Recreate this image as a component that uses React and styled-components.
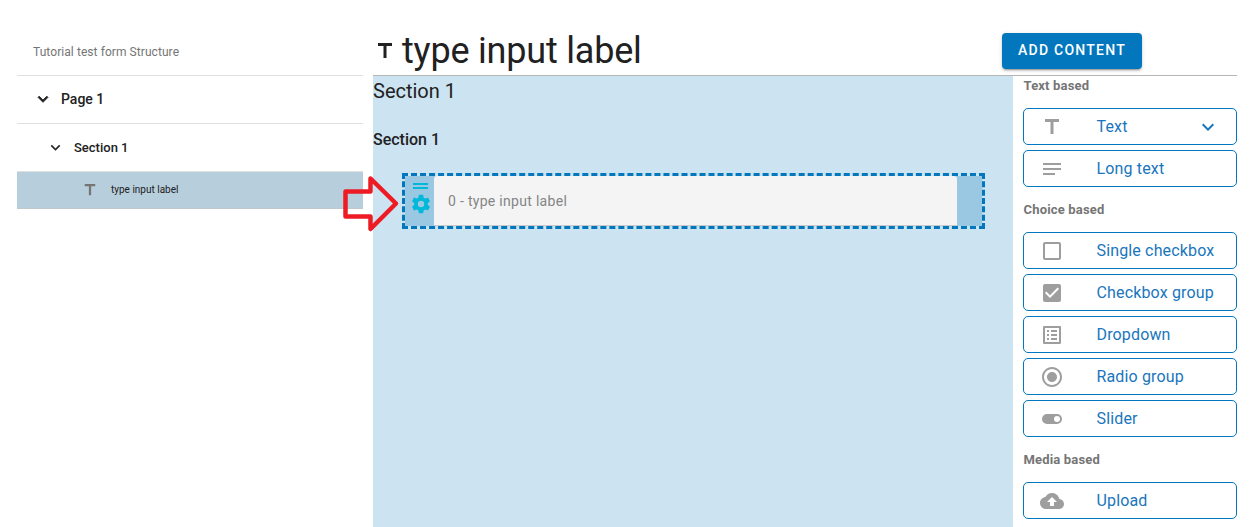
import React from "react";
import styled, { createGlobalStyle } from "styled-components";

const GlobalStyle = createGlobalStyle`
  * { box-sizing: border-box; }
  body {
    margin: 0;
    background: #fff;
    color: #212121;
    font-family: Roboto, "Liberation Sans", sans-serif;
    overflow: hidden;
  }
`;

const ICONS = {
  title: "M5 4v3h5.5v12h3V7H19V4z",
  notes: "M3 18h12v-2H3v2zM3 6v2h18V6H3zm0 7h18v-2H3v2z",
  checkbox:
    "M19 3H5c-1.1 0-2 .9-2 2v14c0 1.1.9 2 2 2h14c1.1 0 2-.9 2-2V5c0-1.1-.9-2-2-2zm0 2v14H5V5h14z",
  checkboxOn:
    "M10 17l-5-5 1.41-1.42L10 14.17l7.59-7.59L19 8m0-5H5c-1.11 0-2 .89-2 2v14c0 1.1.9 2 2 2h14c1.1 0 2-.9 2-2V5c0-1.11-.9-2-2-2z",
  list: "M19 5v14H5V5h14m1.1-2H3.9c-.5 0-.9.4-.9.9v16.2c0 .4.4.9.9.9h16.2c.4 0 .9-.5.9-.9V3.9c0-.5-.5-.9-.9-.9zM11 7h6v2h-6V7zm0 4h6v2h-6v-2zm0 4h6v2h-6v-2zM7 7h2v2H7V7zm0 4h2v2H7v-2zm0 4h2v2H7v-2z",
  radio:
    "M12 7c-2.76 0-5 2.24-5 5s2.24 5 5 5 5-2.24 5-5-2.24-5-5-5zm0-5C6.48 2 2 6.48 2 12s4.48 10 10 10 10-4.48 10-10S17.52 2 12 2zm0 18c-4.42 0-8-3.58-8-8s3.58-8 8-8 8 3.58 8 8-3.58 8-8 8z",
  toggle:
    "M17 7H7a5 5 0 0 0-5 5 5 5 0 0 0 5 5h10a5 5 0 0 0 5-5 5 5 0 0 0-5-5m0 8a3 3 0 0 1-3-3 3 3 0 0 1 3-3 3 3 0 0 1 3 3 3 3 0 0 1-3 3z",
  upload:
    "M19.35 10.04C18.67 6.59 15.64 4 12 4 9.11 4 6.6 5.64 5.35 8.04 2.34 8.36 0 10.91 0 14c0 3.31 2.69 6 6 6h13c2.76 0 5-2.24 5-5 0-2.64-2.05-4.78-4.65-4.96zM14 13v4h-4v-4H7l5-5 5 5h-3z",
  chevron: "M7.41 8.58L12 13.17l4.59-4.59L18 10l-6 6-6-6 1.41-1.42z",
  cog: "M12 15.5A3.5 3.5 0 0 1 8.5 12 3.5 3.5 0 0 1 12 8.5a3.5 3.5 0 0 1 3.5 3.5 3.5 3.5 0 0 1-3.5 3.5m7.43-2.53c.04-.32.07-.64.07-.97s-.03-.66-.07-1l2.11-1.63c.19-.15.24-.42.12-.64l-2-3.46c-.12-.22-.39-.31-.61-.22l-2.49 1c-.52-.39-1.06-.73-1.69-.98l-.37-2.65A.506.506 0 0 0 14 2h-4c-.25 0-.46.18-.5.42l-.37 2.65c-.63.25-1.17.59-1.69.98l-2.49-1c-.22-.09-.49 0-.61.22l-2 3.46c-.13.22-.07.49.12.64L4.57 11c-.04.34-.07.67-.07 1s.03.65.07.97l-2.11 1.66c-.19.15-.25.42-.12.64l2 3.46c.12.22.39.3.61.22l2.49-1.01c.52.4 1.06.74 1.69.99l.37 2.65c.04.24.25.42.5.42h4c.25 0 .46-.18.5-.42l.37-2.65c.63-.26 1.17-.59 1.69-.99l2.49 1.01c.22.08.49 0 .61-.22l2-3.46c.12-.22.07-.49-.12-.64l-2.11-1.66z",
};

const Svg = styled.svg`
  display: block;
  flex: none;
  fill: currentColor;
`;

const Icon = ({ name, size = 24, bold = 0 }) => (
  <Svg width={size} height={size} viewBox="0 0 24 24">
    <path d={ICONS[name]} stroke="currentColor" strokeWidth={bold} />
  </Svg>
);

const Page = styled.div`
  position: relative;
  display: flex;
  gap: 10px;
  width: 1249px;
  height: 527px;
  padding: 28px 12px 0 17px;
  overflow: hidden;
`;

const Sidebar = styled.aside`
  width: 346px;
  flex: none;
`;

const StructureTitle = styled.div`
  height: 48px;
  padding-left: 16px;
  border-bottom: 1px solid #e0e0e0;
  color: #757575;
  font-size: 12px;
  line-height: 48px;
  letter-spacing: 0.07px;
`;

const TreeRow = styled.div`
  display: flex;
  align-items: center;
  height: 48px;
  padding: 0 0 ${(p) => p.$lift || 0}px ${(p) => p.$indent}px;
  gap: ${(p) => p.$gap}px;
  border-bottom: 1px solid #e0e0e0;
  font-size: ${(p) => p.$size}px;
  font-weight: 500;
`;

const TreeLeaf = styled.div`
  display: flex;
  align-items: center;
  gap: 12px;
  height: 37px;
  padding: 0 0 1px 64px;
  background: #b7cedc;
  border-bottom: 1px solid #c0c8cc;
  font-size: 10px;
  color: #212121;

  svg { color: #757575; }
`;

const Main = styled.main`
  display: flex;
  flex-direction: column;
  flex: 1;
`;

const Header = styled.header`
  display: flex;
  flex: none;
  align-items: center;
  height: 48px;
  padding-bottom: 1px;
  border-bottom: 1px solid #b5b5b5;
`;

const Heading = styled.h1`
  flex: 1;
  margin: 0 0 0 5px;
  font-size: 36px;
  font-weight: 400;
  line-height: 46px;
  letter-spacing: -0.2px;
`;

const AddButton = styled.button`
  width: 140px;
  height: 36px;
  margin-right: 95px;
  padding: 0 0 1px;
  border: 0;
  border-radius: 4px;
  background: #0277bd;
  box-shadow: 0 3px 1px -2px rgba(0, 0, 0, 0.2), 0 2px 2px rgba(0, 0, 0, 0.14),
    0 1px 5px rgba(0, 0, 0, 0.12);
  color: #fff;
  font: 500 14px/35px Roboto, sans-serif;
  letter-spacing: 1.25px;
`;

const Workspace = styled.div`
  display: flex;
  flex: 1;
`;

const Canvas = styled.section`
  width: 640px;
  background: #cce3f1;
`;

const CanvasTitle = styled.div`
  height: 48px;
  font-size: 20px;
  line-height: 30px;
`;

const SectionTitle = styled.div`
  height: 49px;
  font-size: 16px;
  font-weight: 500;
  line-height: 31px;
`;

const FieldFrame = styled.div`
  display: flex;
  width: 583px;
  height: 56px;
  margin-left: 29px;
  border: 3px dashed #0277bd;
  background: #9ac8e3 padding-box;
`;

const FieldTools = styled.div`
  display: flex;
  flex-direction: column;
  align-items: center;
  width: 29px;
  padding: 7px 0 0 2px;
  gap: 4px;
  color: #00b8d9;
`;

const DragHandle = styled.div`
  width: 15px;
  height: 6px;
  border: solid currentColor;
  border-width: 2px 0;
`;

const FieldInput = styled.div`
  width: 523px;
  height: 50px;
  padding-left: 14px;
  border-bottom: 1px solid #c8c8c8;
  border-radius: 3px 3px 0 0;
  background: #f4f4f4;
  color: #858585;
  font-size: 14px;
  line-height: 50px;
  letter-spacing: 0.3px;
`;

const Palette = styled.aside`
  width: 214px;
  margin-left: 10px;
`;

const GroupTitle = styled.div`
  height: 32px;
  padding-left: 0.5px;
  color: #757575;
  font-size: 13px;
  font-weight: 700;
  line-height: 19px;
  letter-spacing: 0.17px;
`;

const PaletteGroup = styled.div`
  height: ${(p) => p.$count * 42 + 40}px;
`;

const PaletteItem = styled.div`
  display: flex;
  align-items: center;
  height: 37px;
  margin-bottom: 5px;
  padding: 0 16px;
  border: 1px solid #0277bd;
  border-radius: 5px;
  color: #1976bd;
  font-size: 16px;

  > svg:first-child { color: #9e9e9e; }
`;

const ItemLabel = styled.span`
  flex: 1;
  margin-left: 32.5px;
  letter-spacing: 0.15px;
  white-space: nowrap;
`;

const Pointer = styled.svg`
  position: absolute;
  left: 340px;
  top: 174px;
`;

const GROUPS = [
  { title: "Text based", items: [["title", "Text", true], ["notes", "Long text"]] },
  {
    title: "Choice based",
    items: [
      ["checkbox", "Single checkbox"],
      ["checkboxOn", "Checkbox group"],
      ["list", "Dropdown"],
      ["radio", "Radio group"],
      ["toggle", "Slider"],
    ],
  },
  { title: "Media based", items: [["upload", "Upload"]] },
];

export default function App() {
  return (
    <>
      <GlobalStyle />
      <Page>
        <Sidebar>
          <StructureTitle>Tutorial test form Structure</StructureTitle>
          <TreeRow $indent={16} $gap={8} $size={14} $lift={1}>
            <Icon name="chevron" size={20} bold={1} />
            Page 1
          </TreeRow>
          <TreeRow $indent={29} $gap={9} $size={13}>
            <Icon name="chevron" size={19} />
            Section 1
          </TreeRow>
          <TreeLeaf>
            <Icon name="title" size={18} />
            type input label
          </TreeLeaf>
        </Sidebar>
        <Main>
          <Header>
            <Icon name="title" />
            <Heading>type input label</Heading>
            <AddButton>ADD CONTENT</AddButton>
          </Header>
          <Workspace>
            <Canvas>
              <CanvasTitle>Section 1</CanvasTitle>
              <SectionTitle>Section 1</SectionTitle>
              <FieldFrame>
                <FieldTools>
                  <DragHandle />
                  <Icon name="cog" size={22} />
                </FieldTools>
                <FieldInput>0 - type input label</FieldInput>
              </FieldFrame>
            </Canvas>
            <Palette>
              {GROUPS.map((group) => (
                <PaletteGroup key={group.title} $count={group.items.length}>
                  <GroupTitle>{group.title}</GroupTitle>
                  {group.items.map(([icon, label, open]) => (
                    <PaletteItem key={label}>
                      <Icon name={icon} />
                      <ItemLabel>{label}</ItemLabel>
                      {open && <Icon name="chevron" />}
                    </PaletteItem>
                  ))}
                </PaletteGroup>
              ))}
            </Palette>
          </Workspace>
        </Main>
        <Pointer width="60" height="60" viewBox="0 0 60 60">
          <path
            d="M5.5 17.5H30.5V4.5L56 29.5 30.5 55V42.5H5.5Z"
            fill="none"
            stroke="#ed1c24"
            strokeWidth="4.5"
            strokeLinejoin="round"
          />
        </Pointer>
      </Page>
    </>
  );
}
